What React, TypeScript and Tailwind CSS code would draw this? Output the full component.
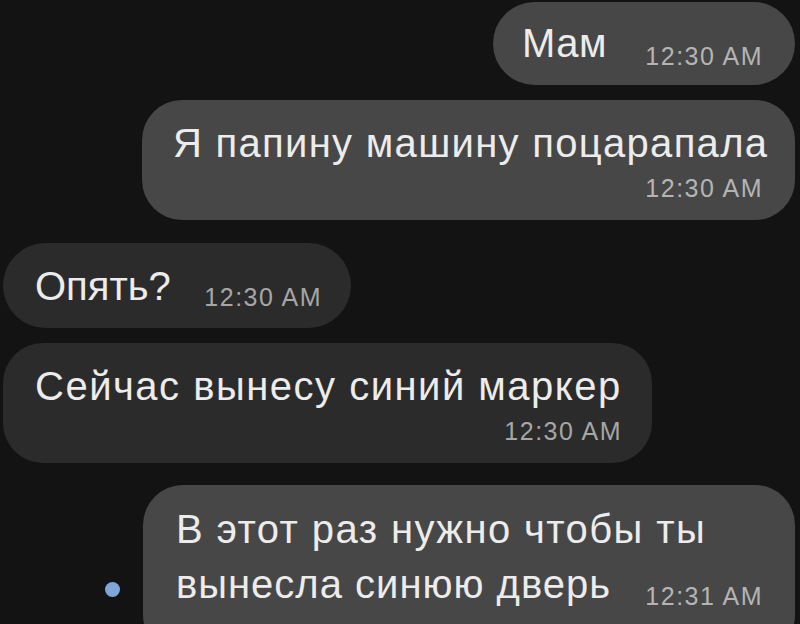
import React from "react";

const font = { fontFamily: '"Liberation Sans", Arial, sans-serif' };

function Time({ children, className = "" }: { children: React.ReactNode; className?: string }) {
  return (
    <span className={`text-[25px] leading-[30px] tracking-[1.5px] whitespace-nowrap ${className}`}>
      {children}
    </span>
  );
}

export default function App() {
  return (
    <div className="h-[624px] w-[800px] overflow-hidden bg-[#131313] text-[#ececec]" style={font}>
      <div className="flex flex-col pt-[2px]">
        {/* Мам */}
        <div className="ml-auto mr-[5px] flex h-[83px] w-[302px] items-baseline justify-between rounded-full bg-[#474747] pl-[29px] pr-[32px] pt-[17px]">
          <span className="text-[40px] leading-[48px] tracking-[0.5px]">Мам</span>
          <Time className="relative top-[8px] text-[#b4b4b4]">12:30 AM</Time>
        </div>

        {/* Я папину машину поцарапала */}
        <div className="ml-auto mr-[5px] mt-[15px] flex h-[120px] w-[653px] flex-col rounded-[40px] bg-[#474747] pl-[31px] pr-[32px] pt-[19px]">
          <span className="text-[40px] leading-[48px] tracking-[1.3px] whitespace-nowrap">Я папину машину поцарапала</span>
          <Time className="mt-[6px] self-end text-[#b4b4b4]">12:30 AM</Time>
        </div>

        {/* Опять? */}
        <div className="ml-[3px] mt-[23px] flex h-[85px] w-[348px] items-baseline justify-between rounded-full bg-[#2b2b2b] pl-[32px] pr-[29px] pt-[19px]">
          <span className="text-[40px] leading-[48px]">Опять?</span>
          <Time className="relative top-[6px] text-[#a6a6a6]">12:30 AM</Time>
        </div>

        {/* Сейчас вынесу синий маркер */}
        <div className="ml-[3px] mt-[15px] flex h-[120px] w-[649px] flex-col rounded-[40px] bg-[#2b2b2b] pl-[32px] pr-[30px] pt-[19px]">
          <span className="text-[40px] leading-[48px] tracking-[1.5px] whitespace-nowrap">Сейчас вынесу синий маркер</span>
          <Time className="mt-[6px] self-end text-[#a6a6a6]">12:30 AM</Time>
        </div>

        {/* В этот раз нужно чтобы ты вынесла синюю дверь */}
        <div className="mt-[22px] flex items-start justify-end pr-[5px]">
          <div className="mr-[23px] mt-[97px] h-[15px] w-[15px] rounded-full bg-[#7ea6d8]" />
          <div className="flex h-[170px] w-[652px] flex-col rounded-[40px] bg-[#474747] pl-[33px] pr-[32px] pt-[17px]">
            <span className="text-[40px] leading-[55px] tracking-[1.4px] whitespace-nowrap">В этот раз нужно чтобы ты</span>
            <div className="flex items-baseline justify-between">
              <span className="text-[40px] leading-[55px] tracking-[1px] whitespace-nowrap">вынесла синюю дверь</span>
              <Time className="relative top-[7px] text-[#b4b4b4]">12:31 AM</Time>
            </div>
          </div>
        </div>
      </div>
    </div>
  );
}
